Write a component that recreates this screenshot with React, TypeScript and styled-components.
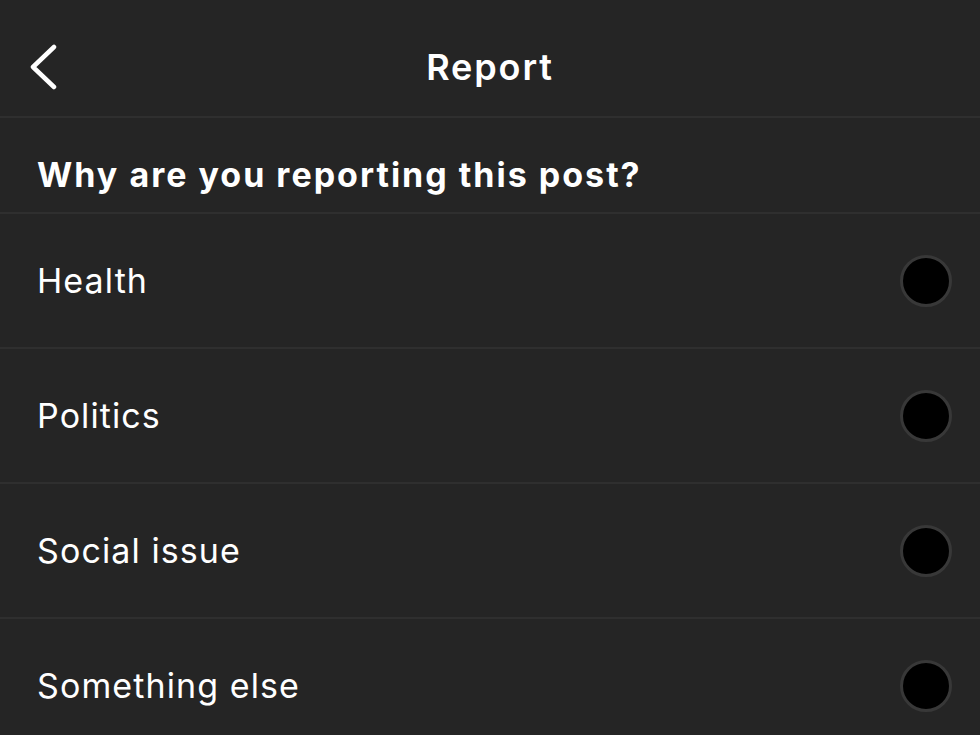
import React from 'react';
import styled, { createGlobalStyle } from 'styled-components';

const GlobalStyle = createGlobalStyle`
  html, body {
    margin: 0;
    padding: 0;
    background: #252525;
  }
  body {
    font-family: Inter, "Noto Sans", "Liberation Sans", sans-serif;
    color: #ffffff;
  }
`;

const Screen = styled.div`
  width: 980px;
  height: 735px;
  overflow: hidden;
  background: #252525;
`;

const Header = styled.div`
  height: 118px;
  display: grid;
  grid-template-columns: 100px 1fr 100px;
  align-items: center;
  padding-top: 18px;
  box-sizing: border-box;
  border-bottom: 2px solid #2f2f2f;
`;

const BackButton = styled.button`
  background: none;
  border: none;
  padding: 0 0 0 26px;
  display: flex;
  align-items: center;
  cursor: pointer;
`;

const Title = styled.div`
  text-align: center;
  font-size: 36px;
  font-weight: 600;
  letter-spacing: 1.9px;
`;

const Question = styled.div`
  height: 96px;
  display: flex;
  align-items: center;
  padding: 18px 0 0 37px;
  box-sizing: border-box;
  font-size: 34px;
  font-weight: 700;
  letter-spacing: 2px;
  border-bottom: 2px solid #2f2f2f;
`;

const Option = styled.label`
  height: 135px;
  box-sizing: border-box;
  display: flex;
  align-items: center;
  justify-content: space-between;
  padding: 0 28px 0 37px;
  border-bottom: 2px solid #2f2f2f;
  font-size: 34px;
  font-weight: 400;
  letter-spacing: 1.1px;
  cursor: pointer;
`;

const Radio = styled.span<{ $checked?: boolean }>`
  width: 52px;
  height: 52px;
  border-radius: 50%;
  background: #000;
  border: 3px solid #383838;
  box-sizing: border-box;
`;

const reasons = ['Health', 'Politics', 'Social issue', 'Something else'];

const App = () => {
  return (
    <Screen>
      <GlobalStyle />
      <Header>
        <BackButton aria-label='Back'>
          <svg width='34' height='46' viewBox='0 0 34 46'>
            <path
              d='M28 3 L7 23 L28 43'
              fill='none'
              stroke='#fff'
              strokeWidth='4.5'
              strokeLinecap='round'
              strokeLinejoin='round'
            />
          </svg>
        </BackButton>
        <Title>Report</Title>
        <div />
      </Header>
      <Question>Why are you reporting this post?</Question>
      {reasons.map((r) => (
        <Option key={r}>
          <span>{r}</span>
          <Radio />
        </Option>
      ))}
    </Screen>
  );
};

export default App;
